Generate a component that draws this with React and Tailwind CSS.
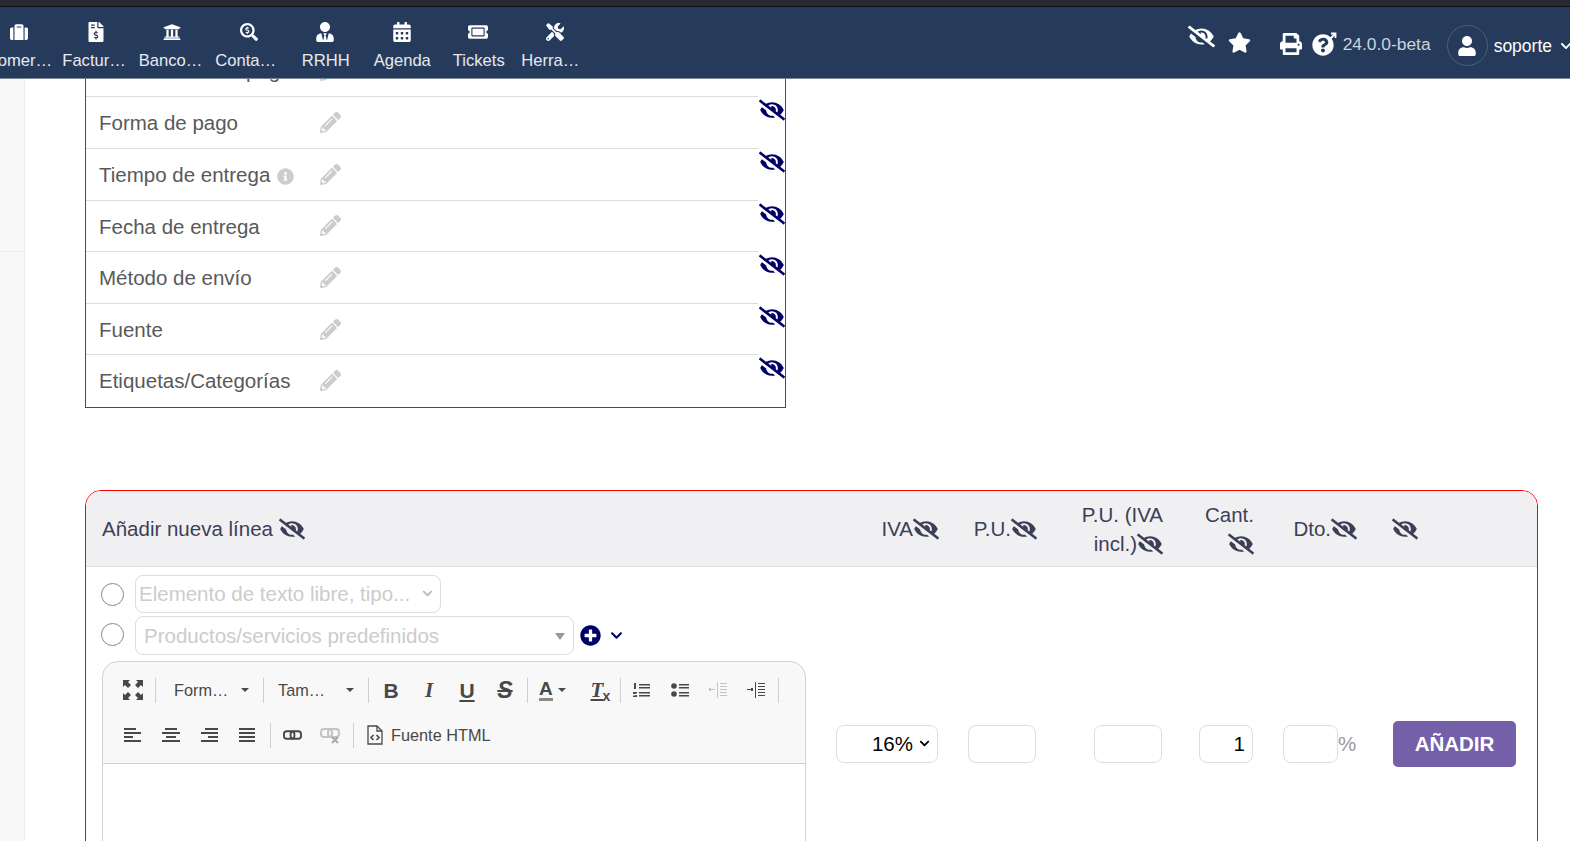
import React from "react";
import {
  FaSuitcase,
  FaFileInvoiceDollar,
  FaUniversity,
  FaSearchDollar,
  FaUserTie,
  FaCalendarAlt,
  FaTicketAlt,
  FaTools,
  FaEyeSlash,
  FaStar,
  FaPrint,
  FaQuestionCircle,
  FaUser,
  FaChevronDown,
  FaPencilAlt,
  FaInfoCircle,
  FaPlusCircle,
} from "react-icons/fa";

const NAV_ITEMS = [
  { label: "Comercial", icon: FaSuitcase },
  { label: "Facturación", icon: FaFileInvoiceDollar },
  { label: "Bancos | Caja", icon: FaUniversity },
  { label: "Contabilidad", icon: FaSearchDollar },
  { label: "RRHH", icon: FaUserTie },
  { label: "Agenda", icon: FaCalendarAlt },
  { label: "Tickets", icon: FaTicketAlt },
  { label: "Herramientas", icon: FaTools },
];

const ROWS = [
  { label: "Condiciones de pago" },
  { label: "Forma de pago" },
  { label: "Tiempo de entrega", info: true },
  { label: "Fecha de entrega" },
  { label: "Método de envío" },
  { label: "Fuente" },
  { label: "Etiquetas/Categorías" },
];

const GRID = "grid grid-cols-[742px_111px_98px_126px_91px_103px_1fr]";

const Bars = ({ rows, color = "#484848" }) => (
  <svg width="18" height="16" viewBox="0 0 18 16" fill={color}>
    {rows.map(([x, y, w, h], i) => (
      <rect key={i} x={x} y={y} width={w} height={h || 2} />
    ))}
  </svg>
);

const Glyph = ({ children, className = "" }) => (
  <span className={`font-['Liberation_Sans',sans-serif] text-[21px] font-bold leading-none text-[#484848] ${className}`}>
    {children}
  </span>
);

const Btn = ({ children, className = "" }) => (
  <div className={`flex h-[25px] w-[38px] shrink-0 items-center justify-center ${className}`}>{children}</div>
);

const Sep = ({ className = "" }) => <div className={`h-[25px] w-px shrink-0 bg-[#cfcfcf] ${className}`} />;

const Caret = ({ className = "" }) => (
  <span className={`h-0 w-0 border-x-[4px] border-t-[4px] border-x-transparent border-t-[#484848] ${className}`} />
);

const Combo = ({ label, className }) => (
  <div className={`flex h-[25px] shrink-0 items-center justify-between pr-[14px] text-[16.3px] text-[#484848] ${className}`}>
    <span>{label}</span>
    <Caret />
  </div>
);

const MaximizeIcon = () => (
  <svg width="20" height="20" viewBox="0 0 20 20" fill="#484848">
    <path d="M0 0h7L5 2l3 3-3 3-3-3-2 2zM20 0v7l-2-2-3 3-3-3 3-3-2-2zM0 20v-7l2 2 3-3 3 3-3 3 2 2zM20 20h-7l2-2-3-3 3-3 3 3 2-2z" />
  </svg>
);

const EditorToolbar = () => (
  <div className="rounded-t-[16px] border border-[#d1d1d1] bg-[#f8f8f8] pb-[15px] pt-[16px]">
    <div className="flex items-center pl-[11px]">
      <Btn>
        <MaximizeIcon />
      </Btn>
      <Sep className="ml-[3px]" />
      <Combo label="Form…" className="w-[107px] pl-[18px]" />
      <Sep />
      <Combo label="Tam…" className="w-[104px] pl-[14px]" />
      <Sep />
      <Btn className="ml-[3px]">
        <Glyph>B</Glyph>
      </Btn>
      <Btn>
        <Glyph className="font-['Liberation_Serif',serif] italic">I</Glyph>
      </Btn>
      <Btn>
        <Glyph className="text-[19px] underline">U</Glyph>
      </Btn>
      <Btn>
        <Glyph className="text-[23px] italic line-through">S</Glyph>
      </Btn>
      <Sep className="ml-[3px]" />
      <div className="ml-[2px] flex h-[25px] w-[48px] shrink-0 items-center pl-[9px]">
        <span className="border-b-[3px] border-[#8a8a8a] font-['Liberation_Sans',sans-serif] text-[19px] font-bold leading-[19px] text-[#484848]">
          A
        </span>
        <Caret className="ml-[5px]" />
      </div>
      <Btn>
        <span className="relative font-['Liberation_Serif',serif] text-[21px] font-bold italic leading-none text-[#484848] underline">
          T
          <span className="absolute -right-[7px] top-[9px] font-['Liberation_Sans',sans-serif] text-[14px] font-bold not-italic no-underline">
            x
          </span>
        </span>
      </Btn>
      <Sep className="ml-[4px]" />
      <Btn className="ml-[2px]">
        <svg width="18" height="16" viewBox="0 0 18 16" fill="#484848">
          <rect x="1" y="1" width="2" height="6" />
          <path d="M0 10h4v1.500H2.500V13H4v2H0v-1.500h2.500V12H0z" />
          <rect x="6" y="2" width="11" height="1.500" />
          <rect x="6" y="5" width="11" height="1.500" />
          <rect x="6" y="10" width="11" height="1.500" />
          <rect x="6" y="13" width="11" height="1.500" />
        </svg>
      </Btn>
      <Btn>
        <svg width="18" height="16" viewBox="0 0 18 16" fill="#484848">
          <circle cx="3" cy="4" r="2.800" />
          <circle cx="3" cy="12" r="2.800" />
          <rect x="8" y="2" width="10" height="1.500" />
          <rect x="8" y="5" width="10" height="1.500" />
          <rect x="8" y="10" width="10" height="1.500" />
          <rect x="8" y="13" width="10" height="1.500" />
        </svg>
      </Btn>
      <Btn>
        <Bars
          color="#c4c4c4"
          rows={[
            [11, 1, 7, 1],
            [11, 4, 7, 1],
            [11, 7, 7, 1],
            [11, 10, 7, 1],
            [11, 13, 7, 1],
            [8, 0, 1, 16],
            [0, 7, 6, 1],
            [0, 6, 2, 3],
          ]}
        />
      </Btn>
      <Btn>
        <Bars
          rows={[
            [11, 1, 7, 1],
            [11, 4, 7, 1],
            [11, 7, 7, 1],
            [11, 10, 7, 1],
            [11, 13, 7, 1],
            [8, 0, 1, 16],
            [0, 7, 6, 1],
            [4, 6, 2, 3],
          ]}
        />
      </Btn>
      <Sep className="ml-[3px]" />
    </div>

    <div className="mt-[20px] flex items-center pl-[11px]">
      <Btn>
        <Bars rows={[[0, 1, 12, 2], [0, 5, 17, 2], [0, 9, 9, 2], [0, 13, 17, 2]]} />
      </Btn>
      <Btn>
        <Bars rows={[[3, 1, 12, 2], [0, 5, 18, 2], [4, 9, 10, 2], [0, 13, 18, 2]]} />
      </Btn>
      <Btn>
        <Bars rows={[[5, 1, 13, 2], [1, 5, 17, 2], [8, 9, 10, 2], [1, 13, 17, 2]]} />
      </Btn>
      <Btn>
        <Bars rows={[[1, 1, 16, 2], [1, 5, 16, 2], [1, 9, 16, 2], [1, 13, 16, 2]]} />
      </Btn>
      <Sep className="ml-[4px]" />
      <Btn className="ml-[2px]">
        <svg width="19" height="12" viewBox="0 0 20 12" fill="none" stroke="#484848" strokeWidth="2">
          <rect x="1" y="2" width="11" height="8" rx="3" />
          <rect x="8" y="2" width="11" height="8" rx="3" />
        </svg>
      </Btn>
      <Btn>
        <svg width="20" height="17" viewBox="0 0 20 17" fill="none" stroke="#c4c4c4" strokeWidth="2">
          <rect x="1" y="2" width="11" height="8" rx="3" />
          <rect x="8" y="2" width="11" height="8" rx="3" />
          <path d="M12 10l6 6M18 10l-6 6" stroke="#aaaaaa" />
        </svg>
      </Btn>
      <Sep className="ml-[4px]" />
      <svg className="ml-[13px]" width="16" height="20" viewBox="0 0 16 20" fill="none" stroke="#484848" strokeWidth="1.300">
        <path d="M1 1h9l5 5v13H1z" />
        <path d="M10 1v5h5" />
        <path d="M6.500 10l-2.500 2.500 2.500 2.500M9.500 10l2.500 2.500-2.500 2.500" strokeWidth="1.600" />
      </svg>
      <span className="ml-[8px] text-[16.3px] text-[#484848]">Fuente HTML</span>
    </div>
  </div>
);

const App = () => {
  return (
    <div className="flex h-[841px] w-[1570px] flex-col overflow-hidden bg-white font-['Liberation_Sans',Arial,sans-serif]">
      <div className="h-[7px] shrink-0 border-b border-[#111114] bg-[#2a2830]" />

      <header className="relative z-10 flex h-[72px] shrink-0 overflow-hidden border-b border-[#7b8794] bg-[#263b5c]">
        <nav className="-ml-[19px] flex">
          {NAV_ITEMS.map(({ label, icon: Icon }) => (
            <div key={label} className="flex w-[76.5px] flex-col items-center pt-[15px]">
              <Icon size={label === "Tickets" ? 20 : 18} color="#ffffff" className="h-[20px]" />
              <div className="mt-[9px] max-w-[69px] truncate pl-[1px] text-[16.6px] leading-[20px] text-[#e6e9ee]">{label}</div>
            </div>
          ))}
        </nav>

        <div className="ml-auto flex shrink-0 items-start">
          <FaEyeSlash size={27} color="#ffffff" className="mt-[16px]" />
          <FaStar size={23} color="#ffffff" className="ml-[13px] mt-[24px]" />
          <FaPrint size={22} color="#ffffff" className="ml-[29px] mt-[26px]" />
          <div className="relative ml-[10px] mt-[26px] h-[24px] w-[24px]">
            <FaQuestionCircle size={22} color="#ffffff" className="mt-[1px]" />
            <svg className="absolute -right-[1px] -top-[1px]" width="10" height="10" viewBox="0 0 10 10" stroke="#ffffff" strokeWidth="1.800" fill="none">
              <path d="M2 8l6-6M4 1.500h4.500V6" />
            </svg>
          </div>
          <span className="ml-[7px] mt-[27px] text-[17.4px] leading-[20px] text-[#cdd2da]">24.0.0-beta</span>
          <div className="ml-[16px] mt-[18px] flex h-[41px] w-[41px] items-center justify-center rounded-full border border-[#4d5f7c]">
            <FaUser size={20} color="#ffffff" />
          </div>
          <span className="ml-[6px] mt-[29px] text-[17.5px] leading-[20px] text-white">soporte</span>
          <FaChevronDown size={12} color="#ffffff" className="ml-[8px] mt-[33px] -mr-[2px]" />
        </div>
      </header>

      <div className="flex min-h-0 flex-1">
        <aside className="w-[25px] shrink-0 border-r border-[#eeeeee] bg-[#f8f8f8] pt-[172px]">
          <div className="h-px bg-[#ececec]" />
        </aside>

        <main className="min-w-0 flex-1 overflow-hidden pl-[60px] pr-[32px]">
          <div className="-mt-[34.2px] w-[701px] border-x border-b border-[#ff0000] pb-[1px]">
            {ROWS.map((row, i) => (
              <div key={row.label} className={`relative h-[51.6px] ${i === 0 ? "" : "w-[672px] border-t border-[#dddddd]"}`}>
                <div className="flex h-full items-center pl-[13px] pt-[2px] text-[20.5px] text-[#595959]">
                  <span className="flex w-[221px] shrink-0 items-center">
                    {row.label}
                    {row.info && <FaInfoCircle size={17} color="#cccccc" className="ml-[7px] mt-[2px]" />}
                  </span>
                  <FaPencilAlt size={21} color="#cccccc" className="-mt-[2px]" />
                </div>
                {i > 0 && <FaEyeSlash size={26} color="#000066" className="absolute -right-[27px] top-0" />}
              </div>
            ))}
          </div>

          <section className="mt-[82px] rounded-[16px] border border-[#ff0000] pb-[40px]">
            <div className={`${GRID} h-[76px] items-center rounded-t-[15px] border-b border-[#dddddd] bg-[#f0f0f3] pt-[1px] text-[20.5px] leading-[29px] text-[#3c3f55]`}>
              <div className="flex items-center pl-[16px]">
                Añadir nueva línea
                <FaEyeSlash size={26} className="ml-[6px]" />
              </div>
              <div className="flex items-center justify-end">
                IVA
                <FaEyeSlash size={26} />
              </div>
              <div className="flex items-center justify-end">
                P.U.
                <FaEyeSlash size={26} />
              </div>
              <div className="pl-[38px] text-right">
                P.U. (IVA incl.)
                <FaEyeSlash size={26} className="inline-block align-[-6px]" />
              </div>
              <div className="pl-[39px] text-right">
                Cant.
                <FaEyeSlash size={26} className="inline-block align-[-6px]" />
              </div>
              <div className="flex items-center justify-end">
                Dto.
                <FaEyeSlash size={26} />
              </div>
              <div className="pl-[35px]">
                <FaEyeSlash size={26} />
              </div>
            </div>

            <div className={GRID}>
              <div className="pl-[16px] pr-[22px] pt-[8px]">
                <div className="flex items-center">
                  <input type="radio" className="-ml-[1px] mr-[1px] mt-[1px] h-[23px] w-[23px] shrink-0 appearance-none rounded-full border border-[#85859a]" />
                  <div className="ml-[10px] flex h-[38px] w-[306px] items-center justify-between rounded-[8px] border border-[#dddddd] pl-[3px] pr-[7px] text-[20.5px] text-[#cccccc]">
                    Elemento de texto libre, tipo...
                    <FaChevronDown size={11} color="#bbbbbb" />
                  </div>
                </div>
                <div className="mt-[3px] flex items-center">
                  <input type="radio" className="-ml-[1px] mr-[1px] -mt-[1px] h-[23px] w-[23px] shrink-0 appearance-none rounded-full border border-[#85859a]" />
                  <div className="ml-[10px] flex h-[39px] w-[439px] items-center justify-between rounded-[8px] border border-[#dddddd] pl-[8px] pr-[8px] pt-[2px] text-[20.5px] text-[#cccccc]">
                    Productos/servicios predefinidos
                    <Caret className="border-x-[5.500px] border-t-[7px] border-t-[#999999]" />
                  </div>
                  <FaPlusCircle size={21} color="#000066" className="ml-[6px]" />
                  <FaChevronDown size={13} color="#000066" className="ml-[9px]" />
                </div>
                <div className="mt-[6px] w-[704px]">
                  <EditorToolbar />
                  <div className="h-[120px] border-x border-[#d1d1d1]" />
                </div>
              </div>

              <div className="pl-[8px] pt-[158px]">
                <div className="flex h-[38px] w-[102px] items-center justify-end rounded-[8px] border border-[#dddddd] pr-[7px] text-[20.5px] text-black">
                  16%
                  <FaChevronDown size={11} className="ml-[6px]" />
                </div>
              </div>
              <div className="pl-[29px] pt-[158px]">
                <input className="h-[38px] w-[68px] rounded-[8px] border border-[#dddddd] bg-white" />
              </div>
              <div className="pl-[57px] pt-[158px]">
                <input className="h-[38px] w-[68px] rounded-[8px] border border-[#dddddd] bg-white" />
              </div>
              <div className="pl-[36px] pt-[158px]">
                <input
                  readOnly
                  value="1"
                  className="h-[38px] w-[54px] rounded-[8px] border border-[#dddddd] bg-white pr-[7px] text-right text-[20.5px] text-black"
                />
              </div>
              <div className="flex items-center self-start pl-[29px] pt-[158px] text-[20.5px] text-[#999999]">
                <input className="h-[38px] w-[55px] shrink-0 rounded-[8px] border border-[#dddddd] bg-white" />
                %
              </div>
              <div className="pl-[36px] pt-[154px]">
                <button className="h-[46px] w-[123px] rounded-[5px] bg-[#7460a9] text-[20.5px] font-bold text-white">AÑADIR</button>
              </div>
            </div>
          </section>
        </main>
      </div>
    </div>
  );
};

export default App;
